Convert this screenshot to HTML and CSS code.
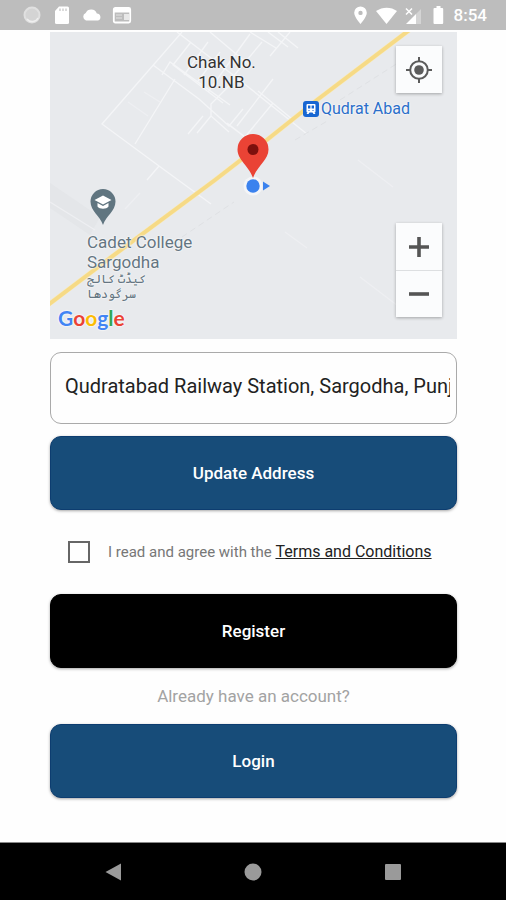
FILE: index.html
```html
<!DOCTYPE html>
<html lang="en">
<head>
<meta charset="utf-8">
<meta name="viewport" content="width=device-width, initial-scale=1">
<title>Register</title>
<link rel="stylesheet" href="styles.css">
</head>
<body>
<header class="status">
  <div class="status-group">
    <svg class="status-icon" viewBox="0 0 20 20"><circle cx="10" cy="10" r="7.500" fill="#d4d4d4" stroke="#e0e0e0" stroke-width="2"/><path d="M5 14a6.500 6.500 0 0 0 11-1" fill="none" stroke="#efefef" stroke-width="1.500"/></svg>
    <svg class="status-icon" viewBox="0 0 20 20"><path d="M7 1.500h8.500A1.500 1.500 0 0 1 17 3v14.500a1.500 1.500 0 0 1-1.500 1.500h-11A1.500 1.500 0 0 1 3 17.500V6z" fill="#fff"/><path d="M8 3.500v2.500M11 3.500v2.500M14 3.500v2.500" stroke="#c8c8c8" stroke-width="1.300"/></svg>
    <svg class="status-icon" viewBox="0 0 20 20"><path d="M4 15.500a4 4 0 0 1-.3-7.500A6 6 0 0 1 14.800 8.500a3.600 3.600 0 0 1 1.200 7z" fill="#fff"/></svg>
    <svg class="status-icon" viewBox="0 0 20 20"><rect x="1.800" y="3" width="16.400" height="14.500" rx="1.500" fill="none" stroke="#fff" stroke-width="1.800"/><path d="M2 4h16v3.500H2z" fill="#fff"/><path d="M4 10h6M4 13h6" stroke="#d6d6d6" stroke-width="1.500"/><path d="M12 9h5v6h-5z" fill="#e8e8e8"/></svg>
  </div>
  <div class="status-group status-right">
    <svg class="status-icon" viewBox="0 0 20 20"><path fill-rule="evenodd" d="M12.500 1.500A6.300 6.300 0 0 0 6.200 7.800C6.200 12 12.500 19 12.500 19s6.300-7 6.300-11.200A6.300 6.300 0 0 0 12.500 1.500zm0 4.200a2.200 2.200 0 1 1 0 4.400 2.200 2.200 0 0 1 0-4.400z" fill="#fff"/></svg>
    <svg class="status-icon wifi" viewBox="0 0 22 20"><path d="M2 6C8.500 1.500 17 1.500 23 6L12.500 19z" fill="#fff"/></svg>
    <svg class="status-icon" viewBox="0 0 20 20"><path d="M19 4v15h-5V9z" fill="#d4d4d4"/><path d="M14 9v10H4z" fill="#fff"/><path d="M4 3.500l6 6M10 3.500l-6 6" stroke="#fff" stroke-width="1.500"/></svg>
    <svg class="status-icon" viewBox="0 0 20 20"><path d="M8.500 1h4v2h1.700a1 1 0 0 1 1 1v14a1 1 0 0 1-1 1H6.500a1 1 0 0 1-1-1V4a1 1 0 0 1 1-1h2z" fill="#fff"/></svg>
    <span class="clock">8:54</span>
  </div>
</header>

<main class="content">
  <section class="map" aria-label="Map">
    <svg class="terrain" viewBox="0 0 407 307" preserveAspectRatio="xMidYMid slice">
      <rect width="407" height="307" fill="#e8eaed"/>
      <path d="M0 151l50 34-10 18-40-27z" fill="#e4e6e9"/>
      <g fill="none" stroke="#f4f5f7" stroke-width="1.300">
        <path d="M132 0L52 92l57 42 52 38M127 0l60 46 70 56M103 33l46 34 30 27 14-17M125 47l-40 65M112 43l8-13 60 43M141 10l-18 23 50 38M158 10l-24 33M170 20l-22 29M160 0l38 32M200 2l-42 58M187 46l-26 26v12l18 16M212 10l-30 36M153 84l-15 18M161 84l-14 17M179 93l16 12 28-34M195 105l-18-14M208 59l34 28M109 134l-12 14M223 47l-36 47M240 0l-20 24M228 0l20 16M200 0l26 16M218 0l20 15"/>
      </g>
      <g fill="none" stroke="#eeeff2" stroke-width="1.200"><path d="M308 128l35 27M235 200l22 16M75 177l15-16M0 170l45 28M94 60l16 10M78 70l20 14M310 245l42 32"/></g>
      <path d="M132 205l52-35M245 108l34-20M290 68l75-48" fill="none" stroke="#dfe1e4" stroke-dasharray="6 4"/>
      <path d="M-2 273L60 226 165 148l53-41 49-39L362-4" fill="none" stroke="#f5ebc8" stroke-width="5"/>
      <path d="M-2 273L60 226 165 148l53-41 49-39L362-4" fill="none" stroke="#f6da86" stroke-width="4"/>
    </svg>
    <p class="place town">Chak No.<br>10.NB</p>
    <p class="place station">
      <svg class="station-icon" viewBox="0 0 16 16"><rect width="16" height="16" rx="3" fill="#1766d2"/><path d="M4.500 3h7a1 1 0 0 1 1 1v6.500a1 1 0 0 1-1 1l1 1.500h-2l-1-1.500h-3L5.500 13h-2l1-1.500a1 1 0 0 1-1-1V4a1 1 0 0 1 1-1z" fill="#fff"/><path d="M5 4.500h2.400v3H5zM8.600 4.500H11v3H8.600zM5.500 9h1v1h-1zM9.500 9h1v1h-1z" fill="#1766d2"/></svg>
      <span>Qudrat Abad</span>
    </p>
    <svg class="college-pin" viewBox="0 0 26 36"><path d="M13 0A12.500 12.500 0 0 0 .5 12.500C.5 22 10 27 13 36c3-9 12.500-14 12.500-23.500A12.500 12.500 0 0 0 13 0z" fill="#607580"/><path d="M13 6.500L4.500 11l8.500 4.500L21.500 11zM7.500 14v3.500c2 3 9 3 11 0V14L13 17z" fill="#fff"/></svg>
    <p class="place college">Cadet College<br>Sargodha<span class="urdu" lang="ur" dir="rtl">کیڈٹ کالج<br>سرگودھا</span></p>
    <svg class="marker" viewBox="0 0 48 62"><circle cx="24" cy="52" r="9.500" fill="#f4f5f8"/><circle cx="24" cy="52" r="6.700" fill="#3b82ee"/><path d="M34 47.500l7 4.500-7 4.500z" fill="#3b82ee"/><path d="M24 0A15.500 15.500 0 0 0 8.500 15.500C8.500 26 20 32 24 44c4-12 15.500-18 15.500-28.500A15.500 15.500 0 0 0 24 0z" fill="#ea4335"/><circle cx="24" cy="15.500" r="5.500" fill="#7d100d"/></svg>
    <p class="brand" aria-label="Google"><span class="b">G</span><span class="r">o</span><span class="y">o</span><span class="b">g</span><span class="g">l</span><span class="r">e</span></p>
    <button class="map-button locate" type="button" aria-label="My location"><svg class="locate-icon" viewBox="0 0 26 26"><g fill="none" stroke="#5c5c5c" stroke-width="2"><circle cx="13" cy="13" r="8.800"/><path d="M13 0v4.500M13 21.500V26M0 13h4.500M21.500 13H26"/></g><circle cx="13" cy="13" r="4.800" fill="#5c5c5c"/></svg></button>
    <div class="zoom">
      <button class="map-button" type="button" aria-label="Zoom in"><svg class="zoom-icon" viewBox="0 0 20 20"><path d="M10 0v20M0 10h20" stroke="#555" stroke-width="3.600"/></svg></button>
      <button class="map-button" type="button" aria-label="Zoom out"><svg class="zoom-icon" viewBox="0 0 20 20"><path d="M0 10h20" stroke="#555" stroke-width="3.600"/></svg></button>
    </div>
  </section>

  <form class="form">
    <input class="address" type="text" aria-label="Address" value="Qudratabad Railway Station, Sargodha, Punjab">
    <button class="button" type="button">Update Address</button>
    <div class="terms">
      <input class="check" id="agree" type="checkbox">
      <label class="terms-text" for="agree">I read and agree with the <a class="terms-link" href="#terms">Terms and Conditions</a></label>
    </div>
    <button class="button dark" type="button">Register</button>
    <p class="prompt">Already have an account?</p>
    <button class="button" type="button">Login</button>
  </form>
</main>

<nav class="system-nav" aria-label="System">
  <button class="nav-button" type="button" aria-label="Back"><svg class="nav-icon" viewBox="0 0 18 18"><path d="M1.500 9L17 .5v17z" fill="#9a9a9a"/></svg></button>
  <button class="nav-button" type="button" aria-label="Home"><svg class="nav-icon" viewBox="0 0 18 18"><circle cx="9" cy="9" r="8.500" fill="#9a9a9a"/></svg></button>
  <button class="nav-button" type="button" aria-label="Recent apps"><svg class="nav-icon" viewBox="0 0 18 18"><rect x="1" y="1" width="16" height="16" rx="1" fill="#9a9a9a"/></svg></button>
</nav>
</body>
</html>
```
FILE: styles.css
```css
* { box-sizing: border-box; }
body {
  margin: 0;
  min-height: 100vh;
  display: flex;
  flex-direction: column;
  background: #fefefe;
  font-family: Roboto, "Liberation Sans", sans-serif;
}
p { margin: 0; }
button { border: 0; padding: 0; font: inherit; cursor: pointer; }
svg { display: block; overflow: visible; }

.status {
  display: flex;
  justify-content: space-between;
  align-items: center;
  height: 30px;
  padding: 0 19px 0 22px;
  background: #bdbdbd;
}
.status-group { display: flex; align-items: center; gap: 10px; }
.status-right { gap: 6px; }
.status-icon { width: 20px; height: 20px; }
.wifi { width: 22px; }
.clock { color: #fff; font-size: 17px; font-weight: 500; line-height: 20px; }

.content { flex: 1; padding: 2px 49px 0 50px; }
.map { position: relative; height: 307px; overflow: hidden; }
.terrain { width: 100%; height: 100%; overflow: hidden; }
.place {
  position: absolute;
  font-size: 17px;
  line-height: 20px;
  text-shadow: 0 0 2px #fff, 0 0 2px #fff;
}
.town { left: 137px; top: 20px; text-align: center; color: #333; }
.station {
  left: 253px;
  top: 67px;
  display: flex;
  align-items: center;
  gap: 2px;
  color: #2b6fc9;
  font-size: 16px;
}
.station-icon { width: 16px; height: 16px; }
.college-pin { position: absolute; left: 40px; top: 157px; width: 26px; height: 36px; }
.college { left: 37px; top: 200px; color: #647581; }
.urdu { display: block; font-size: 12px; line-height: 15px; text-align: left; }
.marker { position: absolute; left: 50%; top: 102px; width: 48px; height: 62px; margin-left: -25px; }
.brand {
  position: absolute;
  left: 8px;
  top: 274px;
  font-family: Lato, sans-serif;
  font-size: 21px;
  font-weight: 700;
  line-height: 24px;
  text-shadow: 0 0 2px #fff, 0 0 2px #fff;
}
.b { color: #4285f4; }
.r { color: #ea4335; }
.y { color: #fbbc05; }
.g { color: #34a853; }

.map-button {
  display: grid;
  place-items: center;
  width: 46px;
  height: 47px;
  background: #fbfcfd;
}
.locate, .zoom { position: absolute; right: 15px; box-shadow: 0 1px 3px rgba(0, 0, 0, 0.3); }
.locate { top: 14px; }
.zoom { bottom: 22px; }
.zoom .map-button + .map-button { border-top: 1px solid #dddfe1; }
.locate-icon { width: 26px; height: 26px; }
.zoom-icon { width: 20px; height: 20px; }

.form { display: flex; flex-direction: column; padding-top: 13px; }
.address {
  width: 100%;
  height: 72px;
  margin-bottom: 12px;
  padding: 0 6px 4px 14px;
  border: 1px solid #aaa;
  border-radius: 11px;
  background: #fefefe;
  color: #222;
  font: 20px Roboto, "Liberation Sans", sans-serif;
}
.button {
  height: 74px;
  border-radius: 11px;
  border: 1px solid #0d3d70;
  background: #174c79;
  color: #fff;
  font-size: 17px;
  font-weight: 500;
  box-shadow: 0 1px 3px rgba(0, 0, 0, 0.35);
}
.dark { border-color: #000; background: #000; }
.terms { display: flex; align-items: center; gap: 18px; height: 84px; padding-left: 18px; }
.check {
  appearance: none;
  width: 22px;
  height: 22px;
  margin: 0;
  border: 2px solid #666;
  background: #fefefe;
}
.check:checked { background: #174c79; }
.terms-text { color: #777; font-size: 15px; line-height: 20px; white-space: nowrap; }
.terms-link { color: #222; font-size: 16px; text-decoration: underline; }
.prompt { padding: 18px 0; text-align: center; color: #a3a3a3; font-size: 17px; line-height: 20px; }

.system-nav {
  display: flex;
  justify-content: center;
  gap: 92px;
  height: 58px;
  border-top: 1px solid #888;
  background: #000;
}
.nav-button { display: grid; place-items: center; width: 48px; background: none; }
.nav-icon { width: 18px; height: 18px; }
```
